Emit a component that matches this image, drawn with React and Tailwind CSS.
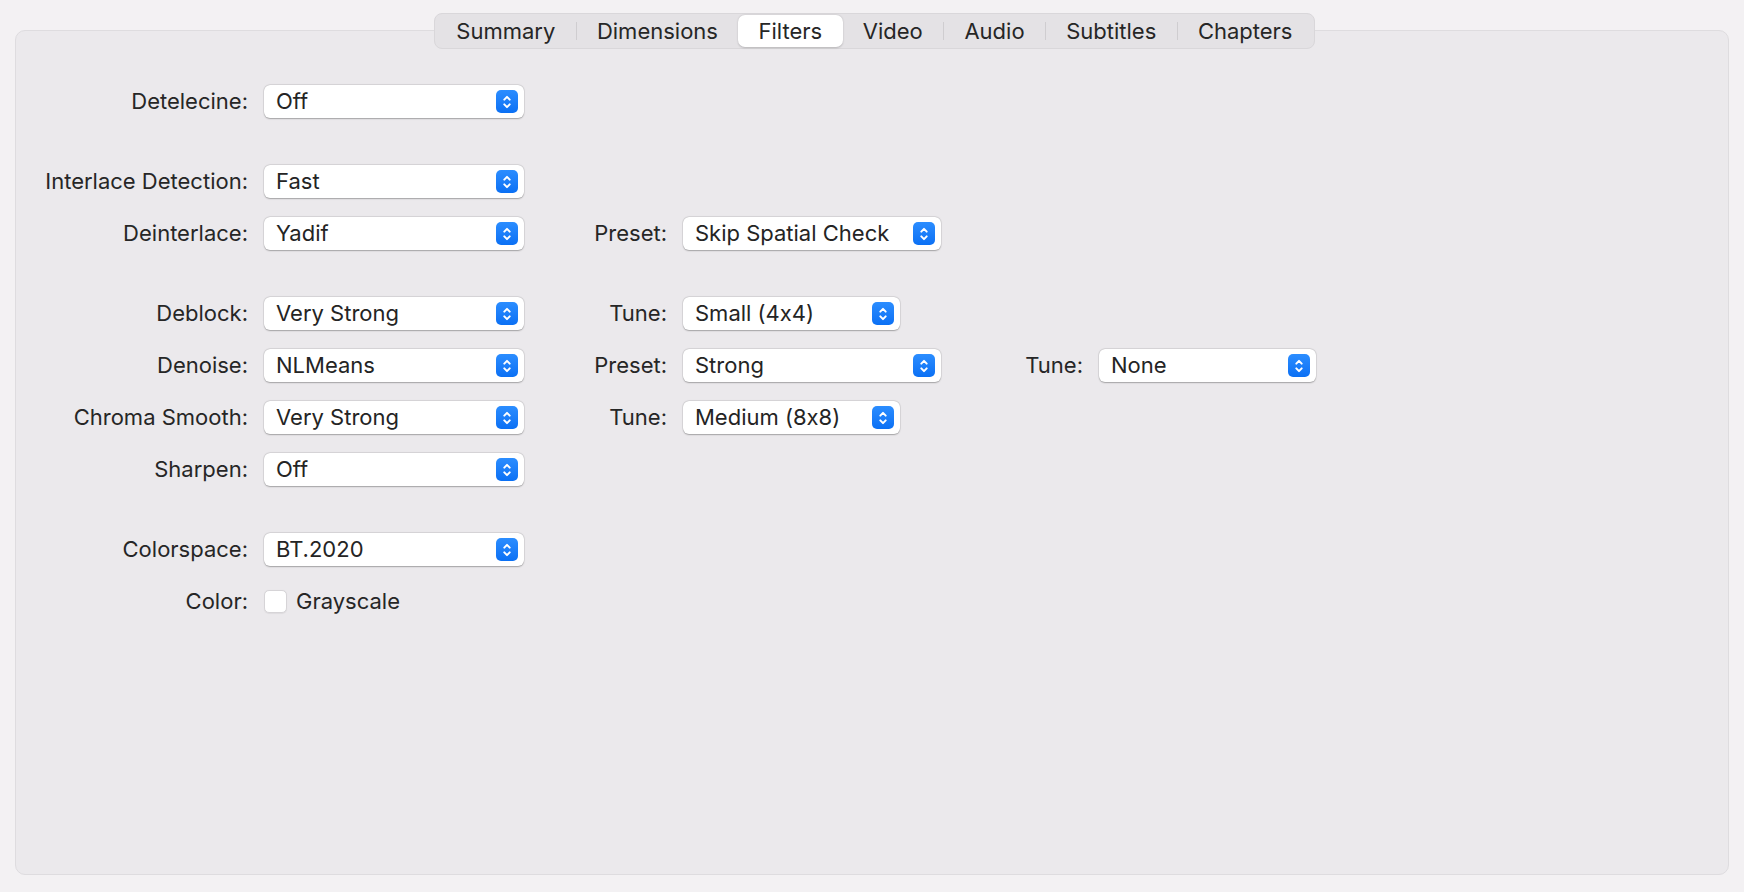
import { Fragment } from 'react'

const TABS = ['Summary', 'Dimensions', 'Filters', 'Video', 'Audio', 'Subtitles', 'Chapters']
const ACTIVE = 'Filters'

// each row: list of [label, value, selectWidth]; gap marks an extra space above the row
const ROWS = [
  { items: [['Detelecine:', 'Off', 260]] },
  { gap: true, items: [['Interlace Detection:', 'Fast', 260]] },
  { items: [['Deinterlace:', 'Yadif', 260], ['Preset:', 'Skip Spatial Check', 258]] },
  { gap: true, items: [['Deblock:', 'Very Strong', 260], ['Tune:', 'Small (4x4)', 217]] },
  { items: [['Denoise:', 'NLMeans', 260], ['Preset:', 'Strong', 258], ['Tune:', 'None', 217]] },
  { items: [['Chroma Smooth:', 'Very Strong', 260], ['Tune:', 'Medium (8x8)', 217]] },
  { items: [['Sharpen:', 'Off', 260]] },
  { gap: true, items: [['Colorspace:', 'BT.2020', 260]] },
]

const LABEL_W = [232, 143, 142]

function Stepper() {
  return (
    <span className="flex h-[23px] w-[22px] items-center justify-center rounded-[5px] bg-gradient-to-b from-[#2b8dff] to-[#0a70f4]">
      <svg width="10" height="16" viewBox="0 0 10 16" fill="none" stroke="white" strokeWidth="2" strokeLinecap="round" strokeLinejoin="round">
        <path d="M2.3 5.6 L5 2.9 L7.7 5.6" />
        <path d="M2.3 10.4 L5 13.1 L7.7 10.4" />
      </svg>
    </span>
  )
}

function Select({ value, width }) {
  return (
    <div
      className="flex h-[33px] items-center justify-between rounded-[6px] bg-white pl-[12px] pr-[6px] text-[22px] text-[#242424] shadow-[0_0.5px_1.5px_rgba(0,0,0,0.28),0_0_0_0.5px_rgba(0,0,0,0.08)]"
      style={{ width }}
    >
      <span>{value}</span>
      <Stepper />
    </div>
  )
}

function Row({ items, gap }) {
  return (
    <div className={`flex h-[33px] items-center ${gap ? 'mt-[47px]' : 'mt-[19px]'} first:mt-0`}>
      {items.map(([label, value, w], i) => (
        <Fragment key={i}>
          <span className="shrink-0 whitespace-nowrap pr-[16px] text-right text-[22px] text-[#262626]" style={{ width: LABEL_W[i] + 16 }}>
            {label}
          </span>
          <Select value={value} width={w} />
        </Fragment>
      ))}
    </div>
  )
}

export default function App() {
  return (
    <div
      className="h-[892px] w-[1744px] bg-[#f3f1f3] px-[15px] pb-[17px] pt-[30px] [font-feature-settings:'calt'_0]"
      style={{ fontFamily: 'Inter, "Noto Sans", sans-serif' }}
    >
      <div className="relative h-full rounded-[10px] border border-[#dedcdf] bg-[#ebe9ec]">
        {/* segmented tabs */}
        <div className="absolute left-[418px] top-[-18px] flex h-[36px] items-center rounded-[8px] border border-[#d9d7da] bg-[#e4e2e5] px-[1px]">
          {TABS.map((t, i) => {
            const active = t === ACTIVE
            const prevActive = TABS[i - 1] === ACTIVE
            return (
              <Fragment key={t}>
                {i > 0 && !active && !prevActive && <span className="h-[18px] w-px bg-[#cfcdd0]" />}
                <span
                  className={`flex h-[32px] items-center px-[20.3px] text-[22px] text-[#262626] ${active ? 'rounded-[7px] bg-white shadow-[0_0.5px_2px_rgba(0,0,0,0.2)]' : ''}`}
                >
                  {t}
                </span>
              </Fragment>
            )
          })}
        </div>

        <div className="flex flex-col pt-[54px]">
          {ROWS.map((r, i) => (
            <Row key={i} {...r} />
          ))}
          <div className="mt-[19px] flex h-[33px] items-center">
            <span className="w-[248px] shrink-0 pr-[16px] text-right text-[22px] text-[#262626]">Color:</span>
            <span className="h-[23px] w-[23px] rounded-[5px] border border-[#d6d4d7] bg-white shadow-[0_0.5px_1px_rgba(0,0,0,0.06)]" />
            <span className="ml-[9px] text-[22px] text-[#262626]">Grayscale</span>
          </div>
        </div>
      </div>
    </div>
  )
}
